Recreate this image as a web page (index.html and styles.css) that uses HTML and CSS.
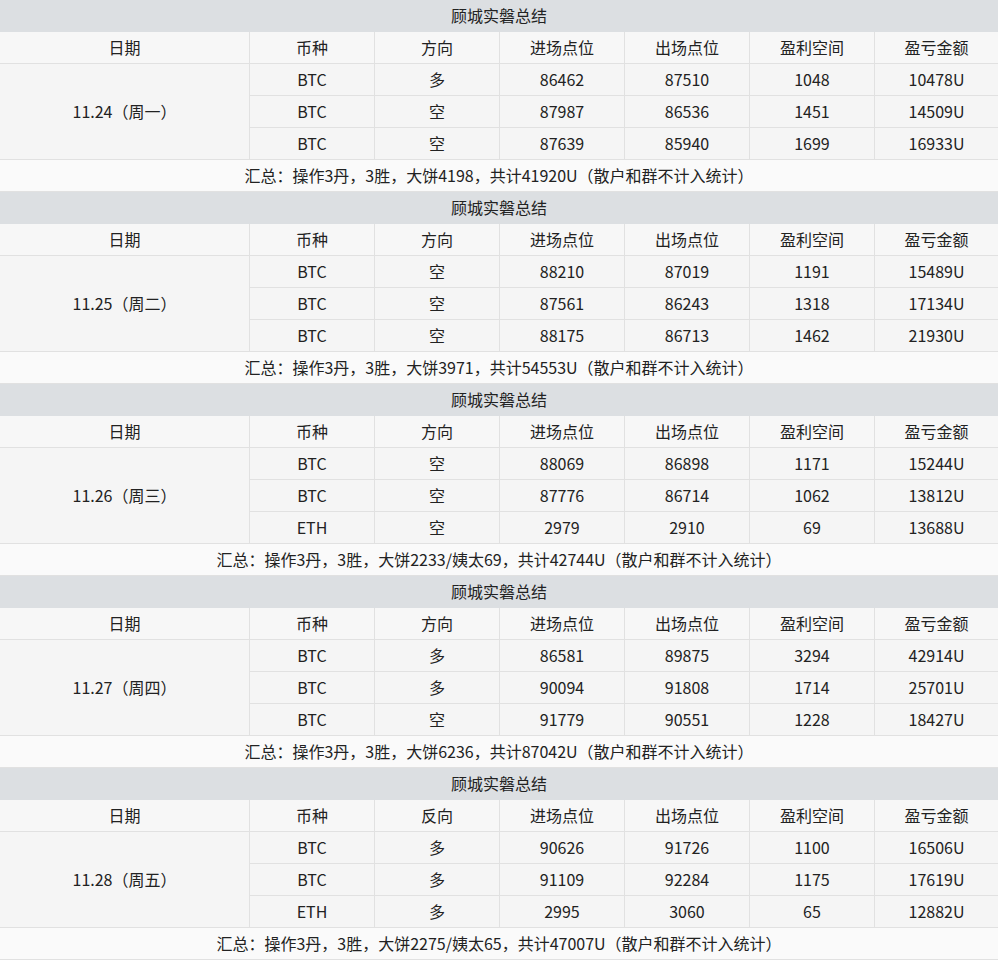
FILE: index.html
```html
<!DOCTYPE html>
<html lang="zh">
<head>
<meta charset="utf-8">
<title>顾城实磐总结</title>
<link rel="stylesheet" href="styles.css">
</head>
<body>
<div class="sheet">
  <section class="block">
    <div class="title">顾城实磐总结</div>
    <div class="hd">日期</div><div class="hd">币种</div><div class="hd">方向</div><div class="hd">进场点位</div><div class="hd">出场点位</div><div class="hd">盈利空间</div><div class="hd last">盈亏金额</div>
    <div class="date">11.24（周一）</div>
    <div class="c">BTC</div><div class="c">多</div><div class="c">86462</div><div class="c">87510</div><div class="c">1048</div><div class="c last">10478U</div>
    <div class="c">BTC</div><div class="c">空</div><div class="c">87987</div><div class="c">86536</div><div class="c">1451</div><div class="c last">14509U</div>
    <div class="c">BTC</div><div class="c">空</div><div class="c">87639</div><div class="c">85940</div><div class="c">1699</div><div class="c last">16933U</div>
    <div class="sum">汇总：操作3丹，3胜，大饼4198，共计41920U（散户和群不计入统计）</div>
  </section>
  <section class="block">
    <div class="title">顾城实磐总结</div>
    <div class="hd">日期</div><div class="hd">币种</div><div class="hd">方向</div><div class="hd">进场点位</div><div class="hd">出场点位</div><div class="hd">盈利空间</div><div class="hd last">盈亏金额</div>
    <div class="date">11.25（周二）</div>
    <div class="c">BTC</div><div class="c">空</div><div class="c">88210</div><div class="c">87019</div><div class="c">1191</div><div class="c last">15489U</div>
    <div class="c">BTC</div><div class="c">空</div><div class="c">87561</div><div class="c">86243</div><div class="c">1318</div><div class="c last">17134U</div>
    <div class="c">BTC</div><div class="c">空</div><div class="c">88175</div><div class="c">86713</div><div class="c">1462</div><div class="c last">21930U</div>
    <div class="sum">汇总：操作3丹，3胜，大饼3971，共计54553U（散户和群不计入统计）</div>
  </section>
  <section class="block">
    <div class="title">顾城实磐总结</div>
    <div class="hd">日期</div><div class="hd">币种</div><div class="hd">方向</div><div class="hd">进场点位</div><div class="hd">出场点位</div><div class="hd">盈利空间</div><div class="hd last">盈亏金额</div>
    <div class="date">11.26（周三）</div>
    <div class="c">BTC</div><div class="c">空</div><div class="c">88069</div><div class="c">86898</div><div class="c">1171</div><div class="c last">15244U</div>
    <div class="c">BTC</div><div class="c">空</div><div class="c">87776</div><div class="c">86714</div><div class="c">1062</div><div class="c last">13812U</div>
    <div class="c">ETH</div><div class="c">空</div><div class="c">2979</div><div class="c">2910</div><div class="c">69</div><div class="c last">13688U</div>
    <div class="sum">汇总：操作3丹，3胜，大饼2233/姨太69，共计42744U（散户和群不计入统计）</div>
  </section>
  <section class="block">
    <div class="title">顾城实磐总结</div>
    <div class="hd">日期</div><div class="hd">币种</div><div class="hd">方向</div><div class="hd">进场点位</div><div class="hd">出场点位</div><div class="hd">盈利空间</div><div class="hd last">盈亏金额</div>
    <div class="date">11.27（周四）</div>
    <div class="c">BTC</div><div class="c">多</div><div class="c">86581</div><div class="c">89875</div><div class="c">3294</div><div class="c last">42914U</div>
    <div class="c">BTC</div><div class="c">多</div><div class="c">90094</div><div class="c">91808</div><div class="c">1714</div><div class="c last">25701U</div>
    <div class="c">BTC</div><div class="c">空</div><div class="c">91779</div><div class="c">90551</div><div class="c">1228</div><div class="c last">18427U</div>
    <div class="sum">汇总：操作3丹，3胜，大饼6236，共计87042U（散户和群不计入统计）</div>
  </section>
  <section class="block">
    <div class="title">顾城实磐总结</div>
    <div class="hd">日期</div><div class="hd">币种</div><div class="hd">反向</div><div class="hd">进场点位</div><div class="hd">出场点位</div><div class="hd">盈利空间</div><div class="hd last">盈亏金额</div>
    <div class="date">11.28（周五）</div>
    <div class="c">BTC</div><div class="c">多</div><div class="c">90626</div><div class="c">91726</div><div class="c">1100</div><div class="c last">16506U</div>
    <div class="c">BTC</div><div class="c">多</div><div class="c">91109</div><div class="c">92284</div><div class="c">1175</div><div class="c last">17619U</div>
    <div class="c">ETH</div><div class="c">多</div><div class="c">2995</div><div class="c">3060</div><div class="c">65</div><div class="c last">12882U</div>
    <div class="sum">汇总：操作3丹，3胜，大饼2275/姨太65，共计47007U（散户和群不计入统计）</div>
  </section>
</div>
</body>
</html>
```
FILE: styles.css
```css
html, body {
  margin: 0;
  padding: 0;
  background: #f7f7f7;
}
.sheet {
  width: 998px;
  font-family: "Noto Sans CJK SC", "Noto Sans", sans-serif;
  font-size: 16px;
  color: #222222;
}
.block {
  display: grid;
  grid-template-columns: 250px 125px 125px 125px 125px 125px 123px;
  grid-template-rows: repeat(6, 32px);
}
.block > div {
  box-sizing: border-box;
  display: flex;
  align-items: center;
  justify-content: center;
  white-space: nowrap;
  padding-bottom: 2px;
  border-right: 1px solid #e1e1e1;
  border-bottom: 1px solid #e1e1e1;
  line-height: 1;
}
.block > div.last { border-right: none; }
.title {
  grid-column: 1 / -1;
  background: #dcdfe2;
  border-right: none !important;
  border-bottom: none !important;
}
.hd { background: #f7f7f7; }
.c { background: #f5f5f5; }
.date {
  grid-row: 3 / 6;
  grid-column: 1;
  background: #f5f5f5;
}
.sum {
  grid-column: 1 / -1;
  background: #fafafa;
  border-right: none !important;
}
```
